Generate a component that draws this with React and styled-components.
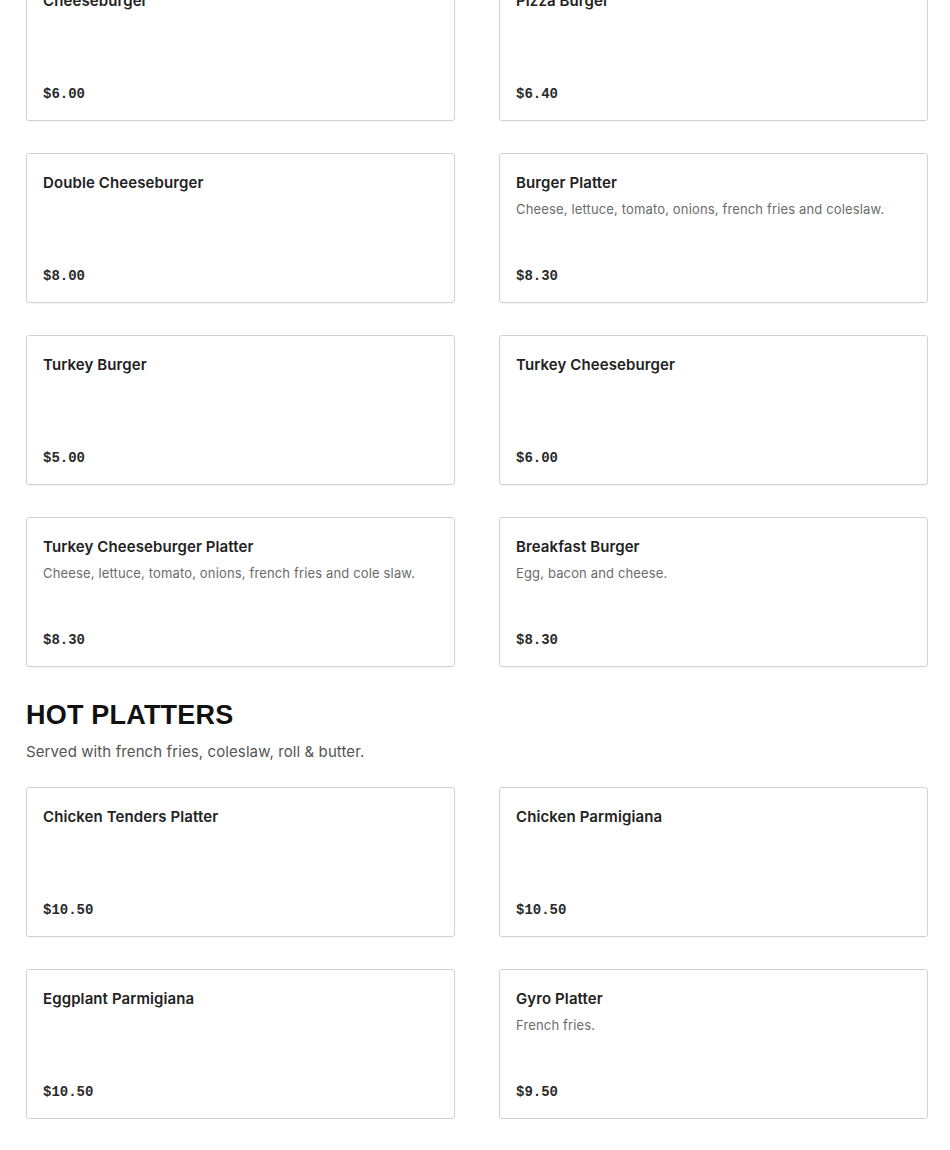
import React from "react";
import styled, { createGlobalStyle } from "styled-components";

const GlobalStyle = createGlobalStyle`
  body {
    margin: 0;
    background: #fff;
    font-family: "Inter", "Liberation Sans", sans-serif;
    color: #222;
  }
`;

const Page = styled.div`
  width: 902px;
  padding: 0 0 0 26px;
  margin-top: -29px;
`;

const Grid = styled.div`
  display: grid;
  grid-template-columns: 1fr 1fr;
  column-gap: 44px;
  row-gap: 32px;
`;

const Card = styled.div`
  box-sizing: border-box;
  height: 150px;
  border: 1px solid #d2d2d2;
  border-radius: 3px;
  padding: 20px 16px 17px;
  display: flex;
  flex-direction: column;
  box-shadow: 0 1px 2px rgba(0, 0, 0, 0.04);
`;

const ItemName = styled.div`
  font-size: 15px;
  line-height: 18px;
  font-weight: 600;
  letter-spacing: 0.1px;
  color: #222;
`;

const ItemDesc = styled.div`
  margin-top: 8px;
  font-size: 13px;
  line-height: 18px;
  letter-spacing: 0.15px;
  color: #6b6b6b;
`;

const Price = styled.div`
  margin-top: auto;
  font-family: "Liberation Mono", "DejaVu Sans Mono", monospace;
  font-weight: 700;
  font-size: 14px;
  line-height: 18px;
  color: #2a2a2a;
`;

const SectionTitle = styled.h2`
  margin: 32px 0 0;
  font-family: "Liberation Sans", Arial, sans-serif;
  font-weight: 900;
  font-size: 27px;
  line-height: 32px;
  color: #111;
  letter-spacing: 0.2px;
`;

const SectionNote = styled.p`
  margin: 11px 0 25px;
  font-size: 15px;
  line-height: 20px;
  letter-spacing: 0.1px;
  color: #555;
`;

const burgers = [
  { name: "Cheeseburger", price: "$6.00" },
  { name: "Pizza Burger", price: "$6.40" },
  { name: "Double Cheeseburger", price: "$8.00" },
  {
    name: "Burger Platter",
    desc: "Cheese, lettuce, tomato, onions, french fries and coleslaw.",
    price: "$8.30",
  },
  { name: "Turkey Burger", price: "$5.00" },
  { name: "Turkey Cheeseburger", price: "$6.00" },
  {
    name: "Turkey Cheeseburger Platter",
    desc: "Cheese, lettuce, tomato, onions, french fries and cole slaw.",
    price: "$8.30",
  },
  { name: "Breakfast Burger", desc: "Egg, bacon and cheese.", price: "$8.30" },
];

const platters = [
  { name: "Chicken Tenders Platter", price: "$10.50" },
  { name: "Chicken Parmigiana", price: "$10.50" },
  { name: "Eggplant Parmigiana", price: "$10.50" },
  { name: "Gyro Platter", desc: "French fries.", price: "$9.50" },
];

const MenuItem = ({ item }) => (
  <Card>
    <ItemName>{item.name}</ItemName>
    {item.desc && <ItemDesc>{item.desc}</ItemDesc>}
    <Price>{item.price}</Price>
  </Card>
);

const App = () => (
  <Page>
    <GlobalStyle />
    <Grid>
      {burgers.map((item) => (
        <MenuItem key={item.name} item={item} />
      ))}
    </Grid>
    <SectionTitle>HOT PLATTERS</SectionTitle>
    <SectionNote>Served with french fries, coleslaw, roll &amp; butter.</SectionNote>
    <Grid>
      {platters.map((item) => (
        <MenuItem key={item.name} item={item} />
      ))}
    </Grid>
  </Page>
);

export default App;
